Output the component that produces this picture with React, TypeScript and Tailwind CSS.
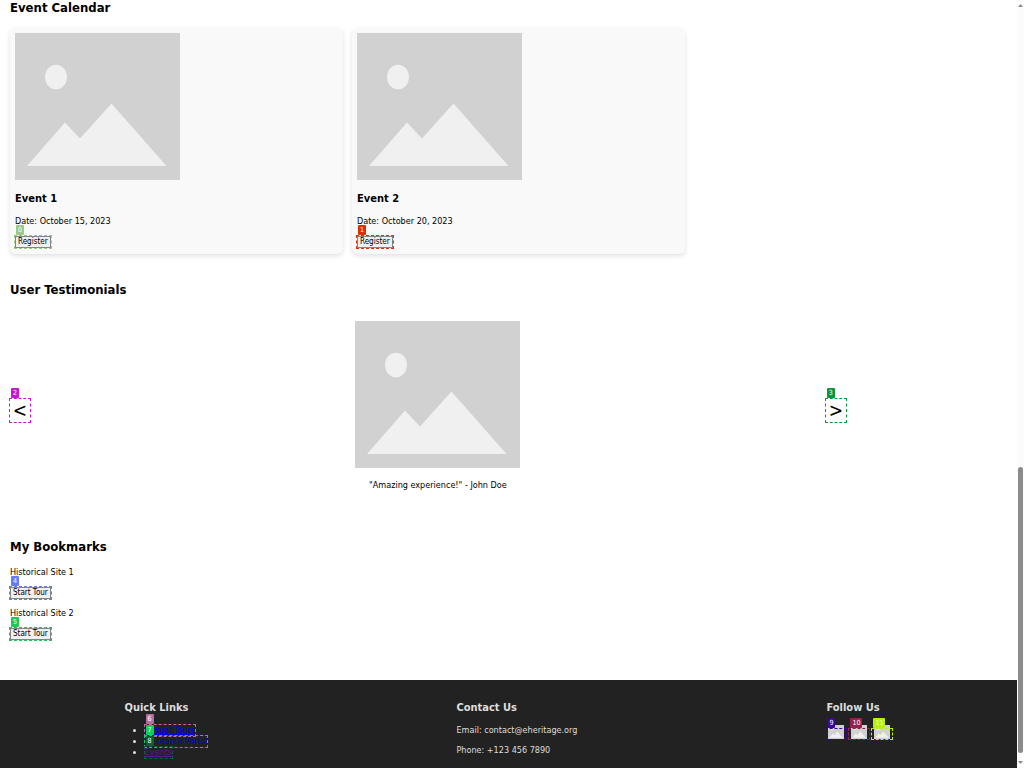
import type { ReactNode } from "react";

function Placeholder({ className }: { className: string }) {
  return (
    <svg viewBox="0 0 165 147" preserveAspectRatio="none" className={className} role="img" aria-label="Placeholder">
      <rect width="165" height="147" fill="#d1d1d1" />
      <ellipse cx="41" cy="44" rx="11" ry="12.3" fill="#f0f0f0" />
      <path d="M12 133 L50 89.500 L65 105.500 L96.500 70.500 L151.500 133 Z" fill="#f0f0f0" />
    </svg>
  );
}

function Marked({ n, box, tag, children, className = "" }: { n: number; box: string; tag: string; children: ReactNode; className?: string }) {
  return (
    <span className={`relative inline-flex ${className}`}>
      {children}
      <span className={`pointer-events-none absolute -inset-px border border-dashed ${box}`} />
      <span className={`absolute -top-[11px] left-px z-10 flex h-[10px] min-w-2 items-center justify-center rounded-[1px] px-[2px] text-[7px] leading-[10px] text-white ${tag}`}>
        {n}
      </span>
    </span>
  );
}

function SmallButton({ children }: { children: ReactNode }) {
  return (
    <button className="h-3 border border-[#858585] bg-[#efefef] px-[2px] text-[8px] leading-[10px] whitespace-nowrap">{children}</button>
  );
}

const events = [
  { title: "Event 1", date: "October 15, 2023", n: 0, box: "border-[#9cc985]", tag: "bg-[#9cc985]" },
  { title: "Event 2", date: "October 20, 2023", n: 1, box: "border-[#df2e05]", tag: "bg-[#df2e05]" },
];

const sites = [
  { title: "Historical Site 1", n: 4, box: "border-[#617dfa]", tag: "bg-[#617dfa]" },
  { title: "Historical Site 2", n: 5, box: "border-[#1cc956]", tag: "bg-[#1cc956]" },
];

const links = [
  { title: "Virtual Tours", n: 6, color: "text-[#0000ee]", box: "border-[#ba6ca0]", tag: "bg-[#ba6ca0]" },
  { title: "Research Portal", n: 7, color: "text-[#0000ee]", box: "border-[#0bd15f]", tag: "bg-[#0bd15f]" },
  { title: "Events", n: 8, color: "text-[#551a8b]", box: "border-[#115c38]", tag: "bg-[#115c38]" },
];

const socials = [
  { title: "Facebook", n: 9, box: "border-[#390796]", tag: "bg-[#390796]" },
  { title: "Twitter", n: 10, box: "border-[#93234d]", tag: "bg-[#93234d]" },
  { title: "Instagram", n: 11, box: "border-[#b5f402]", tag: "bg-[#b5f402]" },
];

export default function App() {
  return (
    <div className="flex h-screen overflow-hidden bg-white font-['DejaVu_Sans_Condensed','DejaVu_Sans',sans-serif] text-[9px] leading-3 text-black">
      <div className="flex min-w-0 flex-1 flex-col overflow-hidden">
        <main className="shrink-0 pl-[10px]">
          <section>
            <h2 className="text-[13px] leading-4 font-bold">Event Calendar</h2>
            <div className="-mr-[10px] mt-3 grid grid-cols-3 gap-[9px]">
              {events.map((e) => (
                <article key={e.n} className="flex flex-col items-start rounded-md bg-[#f9f9f9] p-[5px] pb-[6px] shadow-[0_2px_5px_rgba(0,0,0,0.12)]">
                  <Placeholder className="h-[147px] w-[165px]" />
                  <h3 className="mt-3 text-[11px] leading-[14px] font-bold">{e.title}</h3>
                  <p className="mt-[9px]">Date: {e.date}</p>
                  <Marked n={e.n} box={e.box} tag={e.tag} className="mt-[9px]">
                    <SmallButton>Register</SmallButton>
                  </Marked>
                </article>
              ))}
            </div>
          </section>

          <section className="mt-7">
            <h2 className="text-[13px] leading-4 font-bold">User Testimonials</h2>
            <div className="mt-[23px] flex w-[83%] items-center">
              <Marked n={2} box="border-[#c715d5]" tag="bg-[#c715d5]">
                <button aria-label="Previous" className="h-[23px] w-5 text-[19px] leading-[23px]">&lt;</button>
              </Marked>
              <figure className="flex flex-1 flex-col items-center pl-5">
                <Placeholder className="h-[147px] w-[165px]" />
                <figcaption className="mt-[11px] mb-[9px]">"Amazing experience!" - John Doe</figcaption>
              </figure>
              <Marked n={3} box="border-[#0b963e]" tag="bg-[#0b963e]">
                <button aria-label="Next" className="h-[23px] w-5 text-[19px] leading-[23px]">&gt;</button>
              </Marked>
            </div>
          </section>

          <section className="mt-[39px] pb-10">
            <h2 className="mb-[11px] text-[13px] leading-4 font-bold">My Bookmarks</h2>
            <div className="flex flex-col gap-2">
              {sites.map((s) => (
                <div key={s.n} className="flex flex-col items-start gap-[9px]">
                  <p>{s.title}</p>
                  <Marked n={s.n} box={s.box} tag={s.tag}>
                    <SmallButton>Start Tour</SmallButton>
                  </Marked>
                </div>
              ))}
            </div>
          </section>
        </main>

        <footer className="flex flex-1 items-start justify-around bg-[#222] pt-[21px] text-[#dedede]">
          <nav>
            <h3 className="text-[11px] leading-[14px] font-bold">Quick Links</h3>
            <ul className="mt-[10px] list-disc pl-5 leading-[11px]">
              {links.map((l) => (
                <li key={l.n} className="h-[11px]">
                  <Marked n={l.n} box={l.box} tag={l.tag}>
                    <a href="#" className={`underline ${l.color}`}>{l.title}</a>
                  </Marked>
                </li>
              ))}
            </ul>
          </nav>
          <div>
            <h3 className="text-[11px] leading-[14px] font-bold">Contact Us</h3>
            <p className="mt-[9px]">Email: contact@eheritage.org</p>
            <p className="mt-2">Phone: +123 456 7890</p>
          </div>
          <div>
            <h3 className="text-[11px] leading-[14px] font-bold">Follow Us</h3>
            <div className="mt-[14px] flex gap-[3px]">
              {socials.map((s) => (
                <Marked key={s.n} n={s.n} box={s.box} tag={s.tag}>
                  <a href="#" aria-label={s.title} className="flex h-[10px] w-5 items-end justify-center">
                    <Placeholder className="h-[14px] w-4 shrink-0" />
                  </a>
                </Marked>
              ))}
            </div>
          </div>
        </footer>
      </div>

      <div aria-hidden="true" className="flex w-[7px] flex-col items-center justify-between bg-[#fcfcfc] py-1">
        <svg viewBox="0 0 5 3" className="h-[3px] w-[5px]"><path d="M0 3L2.500 0L5 3Z" fill="#8b8b8b" /></svg>
        <div className="mt-auto mb-2 h-[286px] w-[5px] rounded-full bg-[#8b8b8b]" />
        <svg viewBox="0 0 5 3" className="h-[3px] w-[5px]"><path d="M0 0L2.500 3L5 0Z" fill="#8b8b8b" /></svg>
      </div>
    </div>
  );
}
